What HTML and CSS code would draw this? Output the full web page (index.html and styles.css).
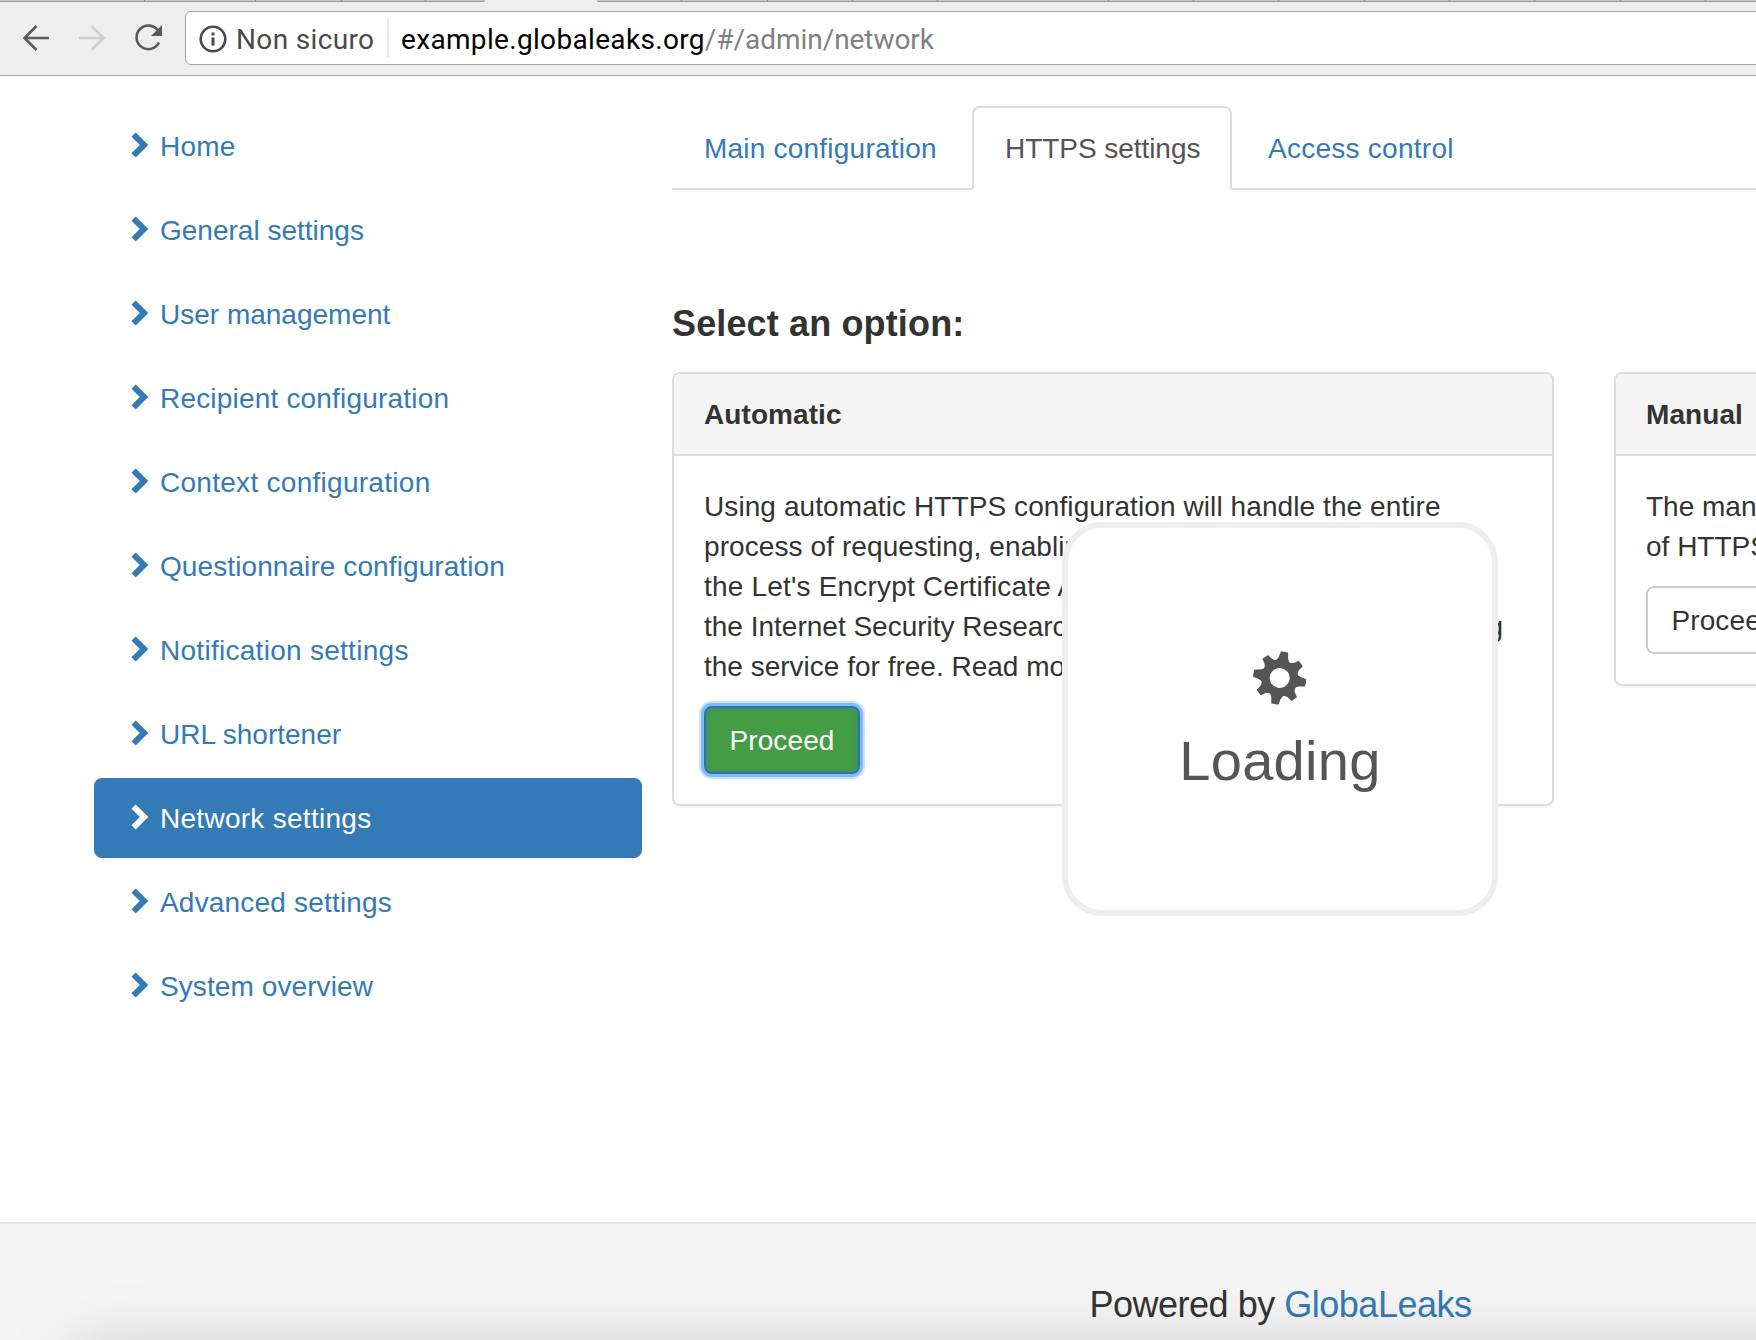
FILE: index.html
```html
<!DOCTYPE html>
<html lang="en">
<head>
<meta charset="utf-8">
<title>GlobaLeaks</title>
<link rel="stylesheet" href="styles.css">
</head>
<body>
<svg class="defs" width="0" height="0"><symbol id="chevron" viewBox="0 0 18 26"><path d="M0.5 4.7L4.7 0.5L17.3 13L4.7 25.5L0.5 21.3L8.8 13Z" fill="currentColor"/></symbol></svg>
<header class="browser">
  <div class="strip">
    <div class="tabs-left"><i class="t1"></i><i class="t2"></i><i class="t3"></i><i class="t4"></i></div>
    <div class="tabs-right"></div>
  </div>
  <div class="toolbar">
    <svg class="nav-icon" width="160" height="36" viewBox="0 0 160 36" fill="none" stroke="#5a5a5a" stroke-width="2.6">
      <path d="M49 18H25M36.5 6L24.5 18L36.5 30"/>
      <path d="M79 18H103M91.500 6L103.500 18L91.500 30" stroke="#cfcfcf"/>
      <path d="M158 10.500A11.800 11.800 0 1 0 159 22.500"/>
      <path d="M162 5V16H151Z" fill="#5a5a5a" stroke="none"/>
    </svg>
    <div class="address">
      <svg width="28" height="28" viewBox="0 0 28 28"><circle cx="14" cy="14" r="12.300" fill="none" stroke="#4a4a4a" stroke-width="2.600"/><path d="M12.500 7.500h3v3h-3zM12.500 12.500h3v8h-3z" fill="#4a4a4a"/></svg>
      <span class="secure">Non sicuro</span>
      <span class="url">example.globaleaks.org<span class="path">/#/admin/network</span></span>
    </div>
  </div>
</header>
<div class="page">
  <nav class="side">
    <a><svg><use href="#chevron"/></svg><span class="track-md">Home</span></a>
    <a><svg><use href="#chevron"/></svg><span>General settings</span></a>
    <a><svg><use href="#chevron"/></svg><span>User management</span></a>
    <a><svg><use href="#chevron"/></svg><span class="track-md">Recipient configuration</span></a>
    <a><svg><use href="#chevron"/></svg><span class="track-lg">Context configuration</span></a>
    <a><svg><use href="#chevron"/></svg><span class="track-sm">Questionnaire configuration</span></a>
    <a><svg><use href="#chevron"/></svg><span class="track-lg">Notification settings</span></a>
    <a><svg><use href="#chevron"/></svg><span>URL shortener</span></a>
    <a class="active"><svg><use href="#chevron"/></svg><span class="track-lg">Network settings</span></a>
    <a><svg><use href="#chevron"/></svg><span class="track-md">Advanced settings</span></a>
    <a><svg><use href="#chevron"/></svg><span class="track-sm">System overview</span></a>
  </nav>
  <main class="content">
    <div class="nav-tabs"><a class="main-tab">Main configuration</a><a class="https-tab active">HTTPS settings</a><a class="access-tab">Access control</a></div>
    <h4>Select an option:</h4>
    <div class="panels">
      <section class="panel">
        <div class="panel-heading">Automatic</div>
        <div class="panel-body">
          <p><span class="track-sm">Using automatic HTTPS configuration will handle the entire</span><br><span class="track-sm">process of requesting, enabling</span><br><span class="track-md">the Let's Encrypt Certificate A</span><br><span class="spread"><span>the Internet Security Research</span><span>g</span></span>the service for free. Read more</p>
          <button class="btn success">Proceed</button>
        </div>
      </section>
      <section class="panel">
        <div class="panel-heading">Manual</div>
        <div class="panel-body">
          <p>The manual<br>of HTTPS</p>
          <button class="btn">Proceed</button>
        </div>
      </section>
    </div>
  </main>
</div>
<footer class="footer"><div>Powered by <a>GlobaLeaks</a></div></footer>
<div class="loading">
  <svg width="56" height="56" viewBox="-28 -28 56 56"><g transform="translate(-.3 0) rotate(10.500)"><g fill="#555"><path id="tooth" d="M-6.500 -17L-4.800 -20.500L-3.700 -26.300Q0 -27 3.700 -26.300L4.800 -20.500L6.500 -17Z"/><path id="corner" transform="rotate(45)" d="M-6.500 -17L-4.500 -20L-3.400 -25.600H3.400L4.500 -20L6.500 -17Z"/><use href="#tooth" transform="rotate(90)"/><use href="#corner" transform="rotate(90)"/><use href="#tooth" transform="rotate(180)"/><use href="#corner" transform="rotate(180)"/><use href="#tooth" transform="rotate(270)"/><use href="#corner" transform="rotate(270)"/></g><circle r="14.300" fill="none" stroke="#555" stroke-width="8.600"/></g></svg>
  <span>Loading</span>
</div>
</body>
</html>
```
FILE: styles.css
```css
* { box-sizing: border-box; }
html, body { margin: 0; width: 1756px; height: 1340px; overflow: hidden; }
body { position: relative; display: flex; flex-direction: column; background: #fff; color: #333; font: 28px/40px "Liberation Sans", Arial, sans-serif; }
.defs { position: absolute; }
.track-sm { letter-spacing: .09px; }
.track-md { letter-spacing: .19px; }
.track-lg { letter-spacing: .28px; }
.browser { height: 76px; background: #eee; border-bottom: 1px solid #a5a5a5; overflow: hidden; }
.strip { height: 2px; display: flex; gap: 112px; }
.tabs-left { width: 485px; height: 2px; background: #c8c8c8; border-bottom: 1px solid #999; border-radius: 0 0 4px 0; display: flex; }
.tabs-left i { border-right: 1px solid #888; height: 1px; }
.t1 { width: 145px; } .t2 { width: 111px; } .t3 { width: 86px; } .t4 { width: 84px; }
.tabs-right { flex: 1; height: 2px; background: repeating-linear-gradient(90deg, #c8c8c8 0 84.300px, #888 84.300px 85.300px); border-bottom: 1px solid #999; border-radius: 0 0 0 4px; }
.toolbar { display: flex; padding-top: 9px; }
.nav-icon { overflow: visible; margin: 9px 25px 0 0; flex: none; }
.address { flex: none; width: 1620px; height: 54px; border: 1px solid #a5a5a5; border-radius: 6px; background: #fff; display: flex; align-items: center; padding-left: 13px; font-family: Roboto, sans-serif; }
.address > svg { margin-top: 2px; flex: none; }
.secure { color: #4a4a4a; margin-left: 9px; width: 153px; height: 40px; line-height: 43px; letter-spacing: .35px; border-right: 2px solid #e8e8e8; white-space: nowrap; }
.url { color: #000; margin-left: 12px; height: 40px; line-height: 43px; letter-spacing: .33px; white-space: nowrap; }
.path { color: #808080; letter-spacing: -.05px; }
.page { flex: none; height: 1146px; display: flex; padding: 30px 0 0 94px; gap: 30px; overflow: hidden; }
.side { width: 548px; flex: none; display: flex; flex-direction: column; gap: 4px; }
.side a { height: 80px; border-radius: 8px; padding: 21px 37px 19px; color: #337ab7; display: flex; gap: 11px; white-space: nowrap; }
.side svg { width: 18px; height: 26px; margin-top: 5px; }
.side .active { background: #337ab7; color: #fff; }
.content { width: 1824px; flex: none; }
.nav-tabs { display: flex; gap: 4px; height: 84px; border-bottom: 2px solid #ddd; }
.nav-tabs a { height: 84px; padding: 21px 30px 19px; border: 2px solid transparent; color: #337ab7; white-space: nowrap; }
.nav-tabs .active { color: #555; background: #fff; border-color: #ddd #ddd #fff; border-radius: 8px 8px 0 0; }
.nav-tabs .main-tab { width: 296px; letter-spacing: .22px; }
.nav-tabs .https-tab { width: 260px; padding-left: 31px; letter-spacing: -.05px; }
.nav-tabs .access-tab { letter-spacing: .26px; }
h4 { font-size: 36px; line-height: 40px; letter-spacing: .14px; margin: 114px 0 28px; }
.panels { display: flex; align-items: flex-start; gap: 60px; }
.panel { width: 882px; flex: none; border: 2px solid #ddd; border-radius: 8px; box-shadow: 0 2px 2px rgba(0,0,0,.05); background: #fff; }
.panel-heading { height: 82px; padding: 21px 30px 19px; font-weight: bold; letter-spacing: .08px; background: #f5f5f5; border-bottom: 2px solid #ddd; border-radius: 6px 6px 0 0; }
.panel-body { padding: 31px 30px 30px; white-space: nowrap; }
.panel p { margin: 0 0 19px; }
.spread { display: flex; justify-content: space-between; width: 799px; }
.btn { display: block; width: 156px; height: 68px; padding: 2px 0 0; border: 2px solid #ccc; border-radius: 8px; background: #fff; color: #333; font: inherit; letter-spacing: .1px; }
.btn.success { background: #449d44; border-color: #2d769b; color: #fff; box-shadow: 0 0 0 3px #7fbaff, 0 0 0 5px #cce3ff, inset 0 0 4px 2px #3f8f70; }
.footer { flex: none; position: relative; height: 118px; border-top: 2px solid #e5e5e5; background: #f5f5f5; font-size: 36px; letter-spacing: -.48px; overflow: hidden; }
.footer div { width: 2561px; text-align: center; padding-top: 61px; }
.footer a { color: #337ab7; }
.footer::after { content: ""; position: absolute; left: 80px; right: -100px; top: 136px; height: 60px; box-shadow: 0 0 70px 6px rgba(0,0,0,.22); }
.loading { position: absolute; left: 1062px; top: 522px; width: 436px; height: 394px; border: 6px solid #eee; border-radius: 40px; background: #fff; color: #555; display: flex; flex-direction: column; align-items: center; padding-top: 122px; font-size: 56px; line-height: 80px; letter-spacing: .3px; }
.loading span { margin-top: 15px; }
```
